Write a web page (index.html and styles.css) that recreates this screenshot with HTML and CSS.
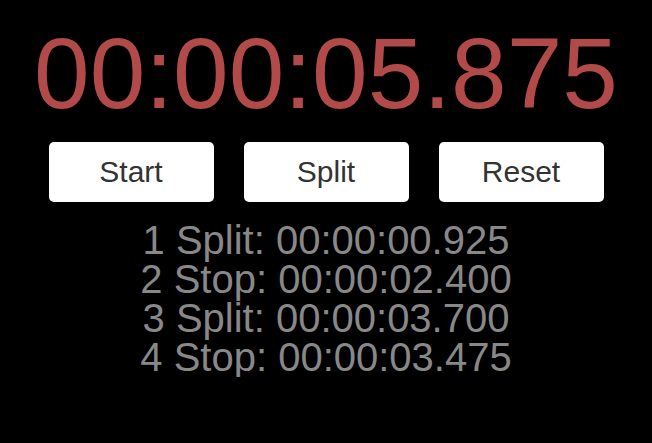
FILE: index.html
```html
<!DOCTYPE html>
<html>
<head>
<meta charset="utf-8">
<link rel="stylesheet" href="styles.css">
</head>
<body>
<div class="app">
  <div class="timer">00:00:05.875</div>
  <div class="controls">
    <button class="btn">Start</button>
    <button class="btn">Split</button>
    <button class="btn">Reset</button>
  </div>
  <ul class="splits">
    <li>1 Split: 00:00:00.925</li>
    <li>2 Stop: 00:00:02.400</li>
    <li>3 Split: 00:00:03.700</li>
    <li>4 Stop: 00:00:03.475</li>
  </ul>
</div>
</body>
</html>
```
FILE: styles.css
```css
html, body {
  margin: 0;
  padding: 0;
  background: #000;
}
.app {
  font-family: "Liberation Sans", Arial, sans-serif;
  display: flex;
  flex-direction: column;
  align-items: center;
  padding-top: 16px;
}
.timer {
  font-size: 100px;
  line-height: 115px;
  color: #b14a48;
}
.controls {
  display: flex;
  gap: 30px;
  margin-top: 11px;
}
.btn {
  width: 165px;
  height: 60px;
  background: #fff;
  border: none;
  border-radius: 5px;
  font-family: "Liberation Sans", Arial, sans-serif;
  font-size: 30px;
  color: #333;
  padding: 0;
}
.splits {
  list-style: none;
  margin: 19px 0 0;
  padding: 0;
  font-size: 40px;
  line-height: 39px;
  color: #888;
  text-align: center;
}
```
